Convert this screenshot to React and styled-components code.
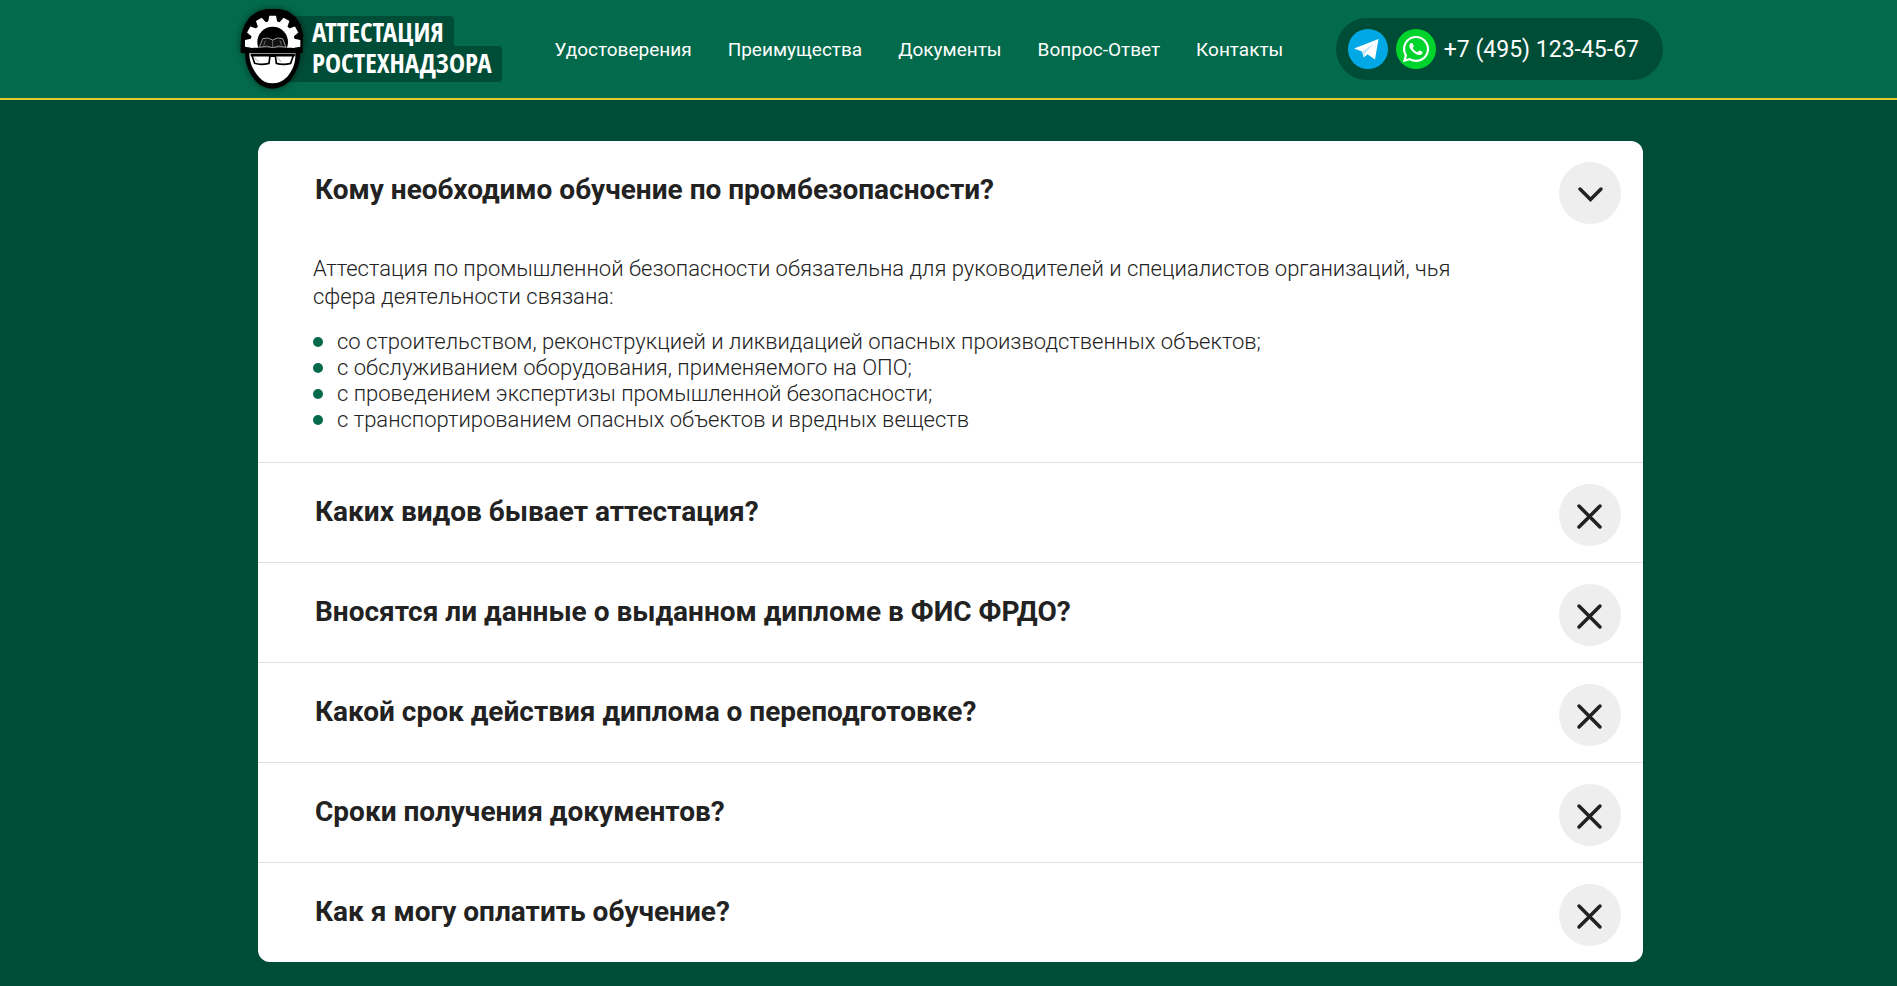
import { useState } from "react";
import styled, { createGlobalStyle } from "styled-components";
import { FaWhatsapp } from "react-icons/fa";

const questions = [
  {
    id: "who",
    title: "Кому необходимо обучение по промбезопасности?",
    text: "Аттестация по промышленной безопасности обязательна для руководителей и специалистов организаций, чья сфера деятельности связана:",
    list: [
      "со строительством, реконструкцией и ликвидацией опасных производственных объектов;",
      "с обслуживанием оборудования, применяемого на ОПО;",
      "с проведением экспертизы промышленной безопасности;",
      "с транспортированием опасных объектов и вредных веществ",
    ],
  },
  { id: "types", title: "Каких видов бывает аттестация?" },
  { id: "frdo", title: "Вносятся ли данные о выданном дипломе в ФИС ФРДО?" },
  { id: "term", title: "Какой срок действия диплома о переподготовке?" },
  { id: "deadline", title: "Сроки получения документов?" },
  { id: "payment", title: "Как я могу оплатить обучение?" },
];

const links = [
  { href: "#certificates", label: "Удостоверения" },
  { href: "#benefits", label: "Преимущества" },
  { href: "#documents", label: "Документы" },
  { href: "#faq", label: "Вопрос-Ответ" },
  { href: "#contacts", label: "Контакты" },
];

const teeth = [-90, -60, -30, 0, 30, 60, 90];

const Helmet = () => (
  <HelmetSvg viewBox="0 0 210 270" aria-hidden="true">
    <path
      d="M8 147 V122 L10 90 L20 62 L36 38 L58 23 L84 15 H124 L150 22 L172 38 L188 62 L196 92 L194 122 V147 H186 C188 176 174 206 158 228 Q134 254 103 254 Q72 254 50 228 C32 204 20 176 22 147 Z"
      fill="#000"
    />
    <clipPath id="helmetTop">
      <rect x="0" y="0" width="210" height="131" />
    </clipPath>
    <g clipPath="url(#helmetTop)" fill="#fff">
      <circle cx="104" cy="118" r="67" />
      {teeth.map((angle) => (
        <path
          key={angle}
          d="M89 60 L94 35 H114 L119 60 Z"
          transform={`rotate(${angle} 104 118)`}
        />
      ))}
      <circle cx="104" cy="114" r="46" fill="#000" />
    </g>
    <path
      d="M64 130 L74 104 Q90 98 104 108 Q118 98 134 104 L144 130 Q122 122 104 131 Q86 122 64 130 Z"
      fill="#111"
      stroke="#999"
      strokeWidth="3"
    />
    <path d="M104 108 V130 M82 110 L77 124 M126 110 L131 124" stroke="#999" strokeWidth="2" />
    <path
      d="M34 148 H172 C174 178 162 202 148 218 Q128 238 104 238 Q78 238 62 218 C44 198 34 174 34 148 Z"
      fill="#fff"
    />
    <path d="M38 149 H170 L172 157 L116 159 H92 L38 157 Z" fill="#000" />
    <path
      d="M42 155 H96 L93 178 Q68 184 50 178 Z M112 155 H166 L158 178 Q136 184 115 178 Z"
      fill="#fff"
      stroke="#000"
      strokeWidth="5"
    />
    <path d="M48 160 L62 174 M118 160 L130 174" stroke="#aaa" strokeWidth="3" />
  </HelmetSvg>
);

const Telegram = () => (
  <svg width="40" height="40" viewBox="0 0 40 40" aria-hidden="true">
    <path d="M6 19.5 L30.5 10 L27 30.5 L19.5 25.2 L15.8 28.6 L14 22.6 Z" fill="#fff" />
    <path d="M14 22.6 L25.5 15 L17.5 24 L16.2 27.5 Z" fill="#c4e5f6" />
  </svg>
);

const Chevron = () => (
  <svg width="62" height="62" viewBox="0 0 62 62" aria-hidden="true">
    <path d="M21 27 L31.5 37.5 L42 27" />
  </svg>
);

const Cross = () => (
  <svg width="62" height="62" viewBox="0 0 62 62" aria-hidden="true">
    <path d="M20 22 L41 43 M41 22 L20 43" />
  </svg>
);

export default function App() {
  const [opened, setOpened] = useState("who");

  return (
    <>
      <GlobalStyle />
      <Header>
        <HeaderInner>
          <Logo href="#top">
            <Helmet />
            <LogoTitle>
              <LogoTop>АТТЕСТАЦИЯ</LogoTop>
              <LogoBottom>РОСТЕХНАДЗОРА</LogoBottom>
            </LogoTitle>
          </Logo>
          <Nav>
            {links.map(({ href, label }) => (
              <NavLink key={href} href={href}>
                {label}
              </NavLink>
            ))}
          </Nav>
          <Contacts>
            <Messenger href="#telegram" aria-label="Telegram" color="#00a9e6">
              <Telegram />
            </Messenger>
            <Messenger href="#whatsapp" aria-label="WhatsApp" color="#00d42c">
              <FaWhatsapp size={30} />
            </Messenger>
            <Phone href="tel:+74951234567">+7 (495) 123-45-67</Phone>
          </Contacts>
        </HeaderInner>
      </Header>

      <Main>
        <Card>
          {questions.map(({ id, title, text, list }) => {
            const isOpen = opened === id;
            return (
              <Item key={id}>
                <Heading>
                  <Question
                    type="button"
                    aria-expanded={isOpen}
                    onClick={() => setOpened(isOpen ? null : id)}
                  >
                    <Title>{title}</Title>
                    <Circle>{isOpen ? <Chevron /> : <Cross />}</Circle>
                  </Question>
                </Heading>
                {isOpen && text && (
                  <Answer>
                    <Text>{text}</Text>
                    <List>
                      {list.map((line) => (
                        <ListItem key={line}>{line}</ListItem>
                      ))}
                    </List>
                  </Answer>
                )}
              </Item>
            );
          })}
        </Card>
      </Main>
    </>
  );
}

// Styled Components

const GlobalStyle = createGlobalStyle`
  * {
    box-sizing: border-box;
  }

  body {
    margin: 0;
    background-color: #004d37;
    color: #222;
    font-family: Roboto, "Liberation Sans", sans-serif;
  }
`;

const Header = styled.header`
  padding-left: 4px;
  background-color: #036a4b;
  border-bottom: 2px solid #e3cb2b;
`;

const HeaderInner = styled.div`
  display: flex;
  align-items: center;
  max-width: 1425px;
  min-height: 98px;
  margin: 0 auto;
`;

const Logo = styled.a`
  display: flex;
  align-items: center;
  flex-shrink: 0;
  color: #fff;
  text-decoration: none;
`;

const HelmetSvg = styled.svg`
  position: relative;
  z-index: 1;
  width: 70px;
  height: 90px;
  filter: drop-shadow(0 0 3px rgba(0, 0, 0, 0.5));
`;

const LogoTitle = styled.span`
  display: flex;
  flex-direction: column;
  align-items: flex-start;
  margin-left: -20px;
  font-family: "Open Sans Condensed", "Roboto Condensed", sans-serif;
  font-size: 27px;
  font-weight: 700;
`;

const LogoTop = styled.span`
  padding: 2px 10px 0 24px;
  line-height: 28px;
  background-color: #004d37;
  border-radius: 4px 4px 0 0;
`;

const LogoBottom = styled.span`
  padding: 0 10px 2px 24px;
  line-height: 34px;
  background-color: #004d37;
  border-radius: 0 4px 4px 0;
`;

const Nav = styled.nav`
  display: flex;
  gap: 36px;
  margin-left: 53px;
`;

const NavLink = styled.a`
  padding-top: 2px;
  color: #fff;
  font-size: 19px;
  line-height: 24px;
  text-decoration: none;
`;

const Contacts = styled.div`
  display: flex;
  align-items: center;
  gap: 8px;
  height: 62px;
  margin-left: auto;
  padding: 0 24px 0 12px;
  background-color: #004d37;
  border-radius: 31px;
`;

const Messenger = styled.a`
  display: flex;
  align-items: center;
  justify-content: center;
  width: 40px;
  height: 40px;
  color: #fff;
  background-color: ${({ color }) => color};
  border-radius: 50%;
`;

const Phone = styled.a`
  padding-top: 2px;
  color: #fff;
  font-size: 23px;
  line-height: 28px;
  white-space: nowrap;
  text-decoration: none;
`;

const Main = styled.main`
  padding: 41px 0 24px 4px;
`;

const Card = styled.section`
  max-width: 1385px;
  margin: 0 auto;
  background-color: #fff;
  border-radius: 12px;
`;

const Item = styled.div`
  & + & {
    border-top: 1px solid #dcdfde;
  }
`;

const Heading = styled.h2`
  margin: 0;
`;

const Question = styled.button`
  display: flex;
  align-items: flex-start;
  justify-content: space-between;
  width: 100%;
  padding: 21px 22px 16px 57px;
  color: inherit;
  font: inherit;
  text-align: left;
  background: none;
  border: 0;
  cursor: pointer;
`;

const Title = styled.span`
  font-size: 28px;
  font-weight: 700;
  line-height: 56px;
`;

const Circle = styled.span`
  flex-shrink: 0;
  width: 62px;
  height: 62px;
  background-color: #eee;
  border-radius: 50%;

  path {
    fill: none;
    stroke: #222;
    stroke-width: 3.5;
    stroke-linecap: round;
  }
`;

const Answer = styled.div`
  padding: 15px 170px 29px 55px;
  font-size: 22px;
  font-weight: 300;
`;

const Text = styled.p`
  margin: 0 0 18px;
  line-height: 28px;
`;

const List = styled.ul`
  margin: 0;
  padding: 0;
  list-style: none;
`;

const ListItem = styled.li`
  display: flex;
  align-items: center;
  gap: 14px;
  line-height: 26px;

  &::before {
    content: "";
    width: 10px;
    height: 10px;
    background-color: #036a4b;
    border-radius: 50%;
  }
`;
